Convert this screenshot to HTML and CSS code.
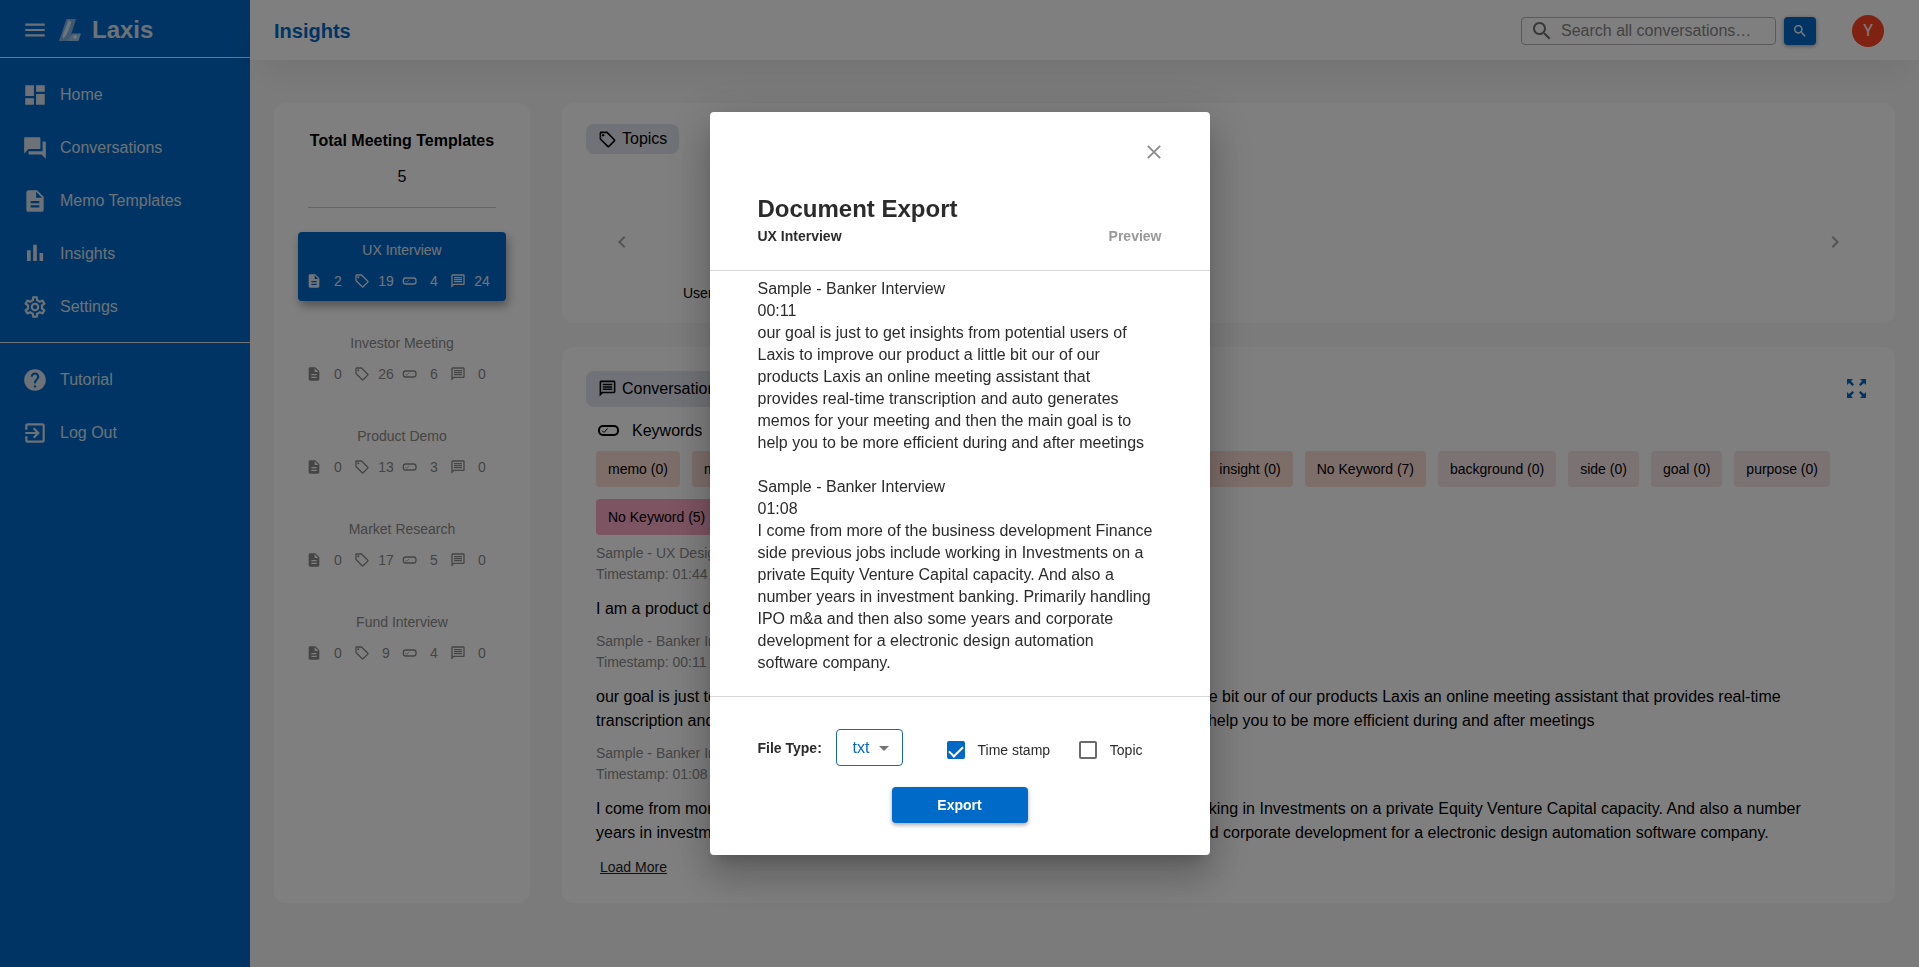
FILE: index.html
```html
<!DOCTYPE html>
<html lang="en">
<head>
<meta charset="utf-8">
<meta name="viewport" content="width=device-width, initial-scale=1">
<title>Laxis - Insights</title>
<link rel="stylesheet" href="styles.css">
</head>
<body>
<svg class="sprite" aria-hidden="true">
  <symbol id="doc" viewBox="0 0 24 24"><path d="M14 2H6c-1.1 0-1.99.9-1.99 2L4 20c0 1.1.89 2 1.99 2H18c1.1 0 2-.9 2-2V8l-6-6zm2 16H8v-2h8v2zm0-4H8v-2h8v2zm-3-5V3.5L18.5 9H13z"/></symbol>
  <symbol id="tag" viewBox="0 0 24 24"><path d="M21.41 11.58l-9-9C12.05 2.22 11.55 2 11 2H4c-1.1 0-2 .9-2 2v7c0 .55.22 1.05.59 1.42l9 9c.36.36.86.58 1.41.58s1.05-.22 1.41-.59l7-7c.37-.36.59-.86.59-1.41s-.23-1.06-.59-1.42zM13 20.01L4 11V4h7v-.01l9 9-7 7.02z"/><circle cx="6.5" cy="6.5" r="1.5"/></symbol>
  <symbol id="pill" viewBox="0 0 24 24"><rect x="2" y="7.500" width="19" height="9" rx="3.500" fill="none" stroke="currentColor" stroke-width="2"/><path d="M5 12l2 2 4-4" fill="none" stroke="currentColor" stroke-width="1"/></symbol>
  <symbol id="chat" viewBox="0 0 24 24"><path d="M4 4h16v12H5.17L4 17.17V4m0-2c-1.1 0-1.99.9-1.99 2L2 22l4-4h14c1.1 0 2-.9 2-2V4c0-1.1-.9-2-2-2H4zm2 10h12v2H6v-2zm0-3h12v2H6V9zm0-3h12v2H6V6z"/></symbol>
  <symbol id="search" viewBox="0 0 24 24"><path d="M15.5 14h-.79l-.28-.27C15.41 12.59 16 11.11 16 9.5 16 5.91 13.09 3 9.5 3S3 5.91 3 9.5 5.91 16 9.5 16c1.61 0 3.09-.59 4.23-1.57l.27.28v.79l5 4.99L20.49 19l-4.99-5zm-6 0C7.01 14 5 11.99 5 9.5S7.01 5 9.5 5 14 7.01 14 9.5 11.99 14 9.5 14z"/></symbol>
</svg>

<div class="app">
  <aside class="sidebar">
    <div class="brand">
      <button class="icon-button" type="button" aria-label="Toggle menu">
        <svg class="nav-icon" viewBox="0 0 24 24"><path d="M3 18h18v-2H3v2zm0-5h18v-2H3v2zm0-7v2h18V6H3z"/></svg>
      </button>
      <svg class="logo" viewBox="0 0 22 22">
        <path d="M7.500 0H17L10 22H0z" fill="#7fb3e2"/>
        <path d="M9.500 1.500Q12.500 1 12 4Q10 13 5 19Q3 20 4 15z" fill="#d6e8f8"/>
        <path d="M13 14.500H22L19.500 22H8.500z" fill="#9cc6ec"/>
        <circle cx="16" cy="18" r="1.800" fill="#e8f3fc"/>
      </svg>
      <span class="brand-name">Laxis</span>
    </div>
    <nav class="nav">
      <a href="#"><svg class="nav-icon" viewBox="0 0 24 24"><path d="M3 13h8V3H3v10zm0 8h8v-6H3v6zm10 0h8V11h-8v10zm0-18v6h8V3h-8z"/></svg>Home</a>
      <a href="#"><svg class="nav-icon" viewBox="0 0 24 24"><path d="M21 6h-2v9H6v2c0 .55.45 1 1 1h11l4 4V7c0-.55-.45-1-1-1zm-4 6V3c0-.55-.45-1-1-1H3c-.55 0-1 .45-1 1v14l4-4h10c.55 0 1-.45 1-1z"/></svg>Conversations</a>
      <a href="#"><svg class="nav-icon"><use href="#doc"/></svg>Memo Templates</a>
      <a href="#"><svg class="nav-icon" viewBox="0 0 24 24"><path d="M4.600 8.500H8V18.500H4.600zM10.300 3.500h3.400v15h-3.400zM16.200 11h3.300v7.500h-3.300z"/></svg>Insights</a>
      <a href="#"><svg class="nav-icon" viewBox="0 0 24 24"><path d="M19.43 12.98c.04-.32.07-.64.07-.98 0-.34-.03-.66-.07-.98l2.11-1.65c.19-.15.24-.42.12-.64l-2-3.46c-.09-.16-.26-.25-.44-.25-.06 0-.12.01-.17.03l-2.49 1c-.52-.4-1.08-.73-1.69-.98l-.38-2.65C14.46 2.18 14.25 2 14 2h-4c-.25 0-.46.18-.49.42l-.38 2.65c-.61.25-1.17.59-1.69.98l-2.49-1c-.06-.02-.12-.03-.18-.03-.17 0-.34.09-.43.25l-2 3.46c-.13.22-.07.49.12.64l2.11 1.65c-.04.32-.07.65-.07.98 0 .33.03.66.07.98l-2.11 1.65c-.19.15-.24.42-.12.64l2 3.46c.09.16.26.25.44.25.06 0 .12-.01.17-.03l2.49-1c.52.4 1.08.73 1.69.98l.38 2.65c.03.24.24.42.49.42h4c.25 0 .46-.18.49-.42l.38-2.65c.61-.25 1.17-.59 1.69-.98l2.49 1c.06.02.12.03.18.03.17 0 .34-.09.43-.25l2-3.46c.12-.22.07-.49-.12-.64l-2.11-1.65zm-1.98-1.71c.04.31.05.52.05.73 0 .21-.02.43-.05.73l-.14 1.13.89.7 1.08.84-.7 1.21-1.27-.51-1.04-.42-.9.68c-.43.32-.84.56-1.25.73l-1.06.43-.16 1.13-.2 1.35h-1.4l-.19-1.35-.16-1.13-1.06-.43c-.43-.18-.83-.41-1.23-.71l-.91-.7-1.06.43-1.27.51-.7-1.21 1.08-.84.89-.7-.14-1.13c-.03-.31-.05-.54-.05-.74s.02-.43.05-.73l.14-1.13-.89-.7-1.08-.84.7-1.21 1.27.51 1.04.42.9-.68c.43-.32.84-.56 1.25-.73l1.06-.43.16-1.13.2-1.35h1.39l.19 1.35.16 1.13 1.06.43c.43.18.83.41 1.23.71l.91.7 1.06-.43 1.27-.51.7 1.21-1.07.85-.89.7.14 1.13zM12 8c-2.21 0-4 1.79-4 4s1.790 4 4 4 4-1.790 4-4-1.790-4-4-4zm0 6c-1.100 0-2-.9-2-2s.9-2 2-2 2 .9 2 2-.9 2-2 2z"/></svg>Settings</a>
    </nav>
    <nav class="nav">
      <a href="#"><svg class="nav-icon" viewBox="0 0 24 24"><path d="M12 2C6.48 2 2 6.48 2 12s4.48 10 10 10 10-4.480 10-10S17.520 2 12 2zm1 17h-2v-2h2v2zm2.070-7.750l-.9.920C13.450 12.900 13 13.500 13 15h-2v-.5c0-1.100.45-2.100 1.170-2.830l1.240-1.260c.37-.36.59-.86.59-1.410 0-1.100-.9-2-2-2s-2 .9-2 2H8c0-2.210 1.790-4 4-4s4 1.790 4 4c0 .88-.36 1.680-.93 2.250z"/></svg>Tutorial</a>
      <a href="#"><svg class="nav-icon" viewBox="0 0 24 24"><path d="M10.090 15.590L11.500 17l5-5-5-5-1.410 1.410L12.670 11H3v2h9.670l-2.580 2.590zM19 3H5c-1.110 0-2 .9-2 2v4h2V5h14v14H5v-4H3v4c0 1.100.89 2 2 2h14c1.100 0 2-.9 2-2V5c0-1.100-.9-2-2-2z"/></svg>Log Out</a>
    </nav>
  </aside>

  <div class="page">
    <header class="topbar">
      <h1>Insights</h1>
      <form class="search">
        <label class="search-box">
          <svg class="search-icon"><use href="#search"/></svg>
          <input type="text" placeholder="Search all conversations…" aria-label="Search all conversations">
        </label>
        <button class="search-button" type="button" aria-label="Search"><svg><use href="#search"/></svg></button>
      </form>
      <div class="avatar">Y</div>
    </header>

    <main class="content">
      <section class="card templates">
        <div class="templates-head">
          <h2>Total Meeting Templates</h2>
          <p>5</p>
        </div>
        <button type="button" class="template active">
          <span class="template-name">UX Interview</span>
          <span class="stats"><svg><use href="#doc"/></svg><span>2</span><svg><use href="#tag"/></svg><span>19</span><svg><use href="#pill"/></svg><span>4</span><svg><use href="#chat"/></svg><span>24</span></span>
        </button>
        <button type="button" class="template">
          <span class="template-name">Investor Meeting</span>
          <span class="stats"><svg><use href="#doc"/></svg><span>0</span><svg><use href="#tag"/></svg><span>26</span><svg><use href="#pill"/></svg><span>6</span><svg><use href="#chat"/></svg><span>0</span></span>
        </button>
        <button type="button" class="template">
          <span class="template-name">Product Demo</span>
          <span class="stats"><svg><use href="#doc"/></svg><span>0</span><svg><use href="#tag"/></svg><span>13</span><svg><use href="#pill"/></svg><span>3</span><svg><use href="#chat"/></svg><span>0</span></span>
        </button>
        <button type="button" class="template">
          <span class="template-name">Market Research</span>
          <span class="stats"><svg><use href="#doc"/></svg><span>0</span><svg><use href="#tag"/></svg><span>17</span><svg><use href="#pill"/></svg><span>5</span><svg><use href="#chat"/></svg><span>0</span></span>
        </button>
        <button type="button" class="template">
          <span class="template-name">Fund Interview</span>
          <span class="stats"><svg><use href="#doc"/></svg><span>0</span><svg><use href="#tag"/></svg><span>9</span><svg><use href="#pill"/></svg><span>4</span><svg><use href="#chat"/></svg><span>0</span></span>
        </button>
      </section>

      <div class="column">
        <section class="card topics">
          <h2 class="section-chip"><svg><use href="#tag"/></svg>Topics</h2>
          <div class="carousel">
            <button class="icon-button" type="button" aria-label="Previous"><svg viewBox="0 0 24 24"><path d="M15.410 7.410L14 6l-6 6 6 6 1.410-1.410L10.830 12z"/></svg></button>
            <button class="icon-button" type="button" aria-label="Next"><svg viewBox="0 0 24 24"><path d="M8.590 16.590L10 18l6-6-6-6-1.410 1.410L13.170 12z"/></svg></button>
          </div>
          <p class="topic-name">User Interview</p>
        </section>

        <section class="card conversations">
          <div class="conversations-head">
            <h2 class="section-chip tall"><svg><use href="#chat"/></svg>Conversations</h2>
            <button class="icon-button expand" type="button" aria-label="Full screen">
              <svg viewBox="0 0 19 19"><path d="M0 0H6L4 2 7 5.500 5.500 7 2 4 0 6zM19 0V6L17 4 13.500 7 12 5.500 15 2 13 0zM0 19V13L2 15 5.500 12 7 13.500 4 17 6 19zM19 19H13L15 17 12 13.500 13.500 12 17 15 19 13z"/></svg>
            </button>
          </div>
          <div class="conversations-body">
            <h3 class="keywords"><svg viewBox="0 0 22 12"><rect x="1" y="1" width="19" height="9" rx="4" fill="none" stroke="currentColor" stroke-width="2"/><path d="M4 5.500l2 2 3.500-4" fill="none" stroke="currentColor" stroke-width="1"/></svg>Keywords</h3>
            <div class="chips">
              <button type="button" class="chip peach">memo (0)</button>
              <button type="button" class="chip peach">meeting (0)</button>
              <button type="button" class="chip peach">transcription (0)</button>
              <button type="button" class="chip peach">product (0)</button>
              <button type="button" class="chip peach">users (0)</button>
              <button type="button" class="chip peach">app (0)</button>
              <button type="button" class="chip peach">insight (0)</button>
              <button type="button" class="chip peach">No Keyword (7)</button>
              <button type="button" class="chip rose">background (0)</button>
              <button type="button" class="chip rose">side (0)</button>
              <button type="button" class="chip rose">goal (0)</button>
              <button type="button" class="chip rose">purpose (0)</button>
              <button type="button" class="chip pink">No Keyword (5)</button>
            </div>
            <article class="excerpt">
              <p class="meta">Sample - UX Design<br>Timestamp: 01:44</p>
              <p>I am a product designer</p>
            </article>
            <article class="excerpt">
              <p class="meta">Sample - Banker Interview<br>Timestamp: 00:11</p>
              <p>our goal is just to get insights from potential users of Laxis to improve our product a little bit our of our products Laxis an online meeting assistant that provides real-time<br>transcription and auto generates memos for your meeting and then the main goal is to help you to be more efficient during and after meetings</p>
            </article>
            <article class="excerpt">
              <p class="meta">Sample - Banker Interview<br>Timestamp: 01:08</p>
              <p>I come from more of the business development Finance side previous jobs include working in Investments on a private Equity Venture Capital capacity. And also a number<br>years in investment banking. Primarily handling IPO m&amp;a and then also some years and corporate development for a electronic design automation software company.</p>
            </article>
            <a class="load-more" href="#">Load More</a>
          </div>
        </section>
      </div>
    </main>
  </div>
</div>

<div class="backdrop">
  <div class="dialog" role="dialog" aria-modal="true" aria-labelledby="dialog-title">
    <div class="dialog-head">
      <button class="icon-button close" type="button" aria-label="Close"><svg viewBox="0 0 14 14"><path d="M.8.8l12.400 12.400M13.200.8L.8 13.200" fill="none" stroke="currentColor" stroke-width="1.800"/></svg></button>
      <h2 id="dialog-title">Document Export</h2>
      <div class="dialog-sub"><span>UX Interview</span><span class="preview">Preview</span></div>
    </div>
    <div class="dialog-body">
      <p>Sample - Banker Interview<br>00:11<br>our goal is just to get insights from potential users of<br>Laxis to improve our product a little bit our of our<br>products Laxis an online meeting assistant that<br>provides real-time transcription and auto generates<br>memos for your meeting and then the main goal is to<br>help you to be more efficient during and after meetings</p>
      <p>Sample - Banker Interview<br>01:08<br>I come from more of the business development Finance<br>side previous jobs include working in Investments on a<br>private Equity Venture Capital capacity. And also a<br>number years in investment banking. Primarily handling<br>IPO m&amp;a and then also some years and corporate<br>development for a electronic design automation<br>software company.</p>
    </div>
    <form class="dialog-foot">
      <div class="options">
        <label class="file-label" for="file-type">File Type:</label>
        <span class="select-wrap">
          <select id="file-type"><option>txt</option></select>
          <svg viewBox="0 0 10 5"><path d="M0 0h10L5 5z"/></svg>
        </span>
        <label class="check"><input type="checkbox" checked>Time stamp</label>
        <label class="check second"><input type="checkbox">Topic</label>
      </div>
      <button class="export" type="button">Export</button>
    </form>
  </div>
</div>
</body>
</html>
```
FILE: styles.css
```css
:root {
  --primary: #0069c8;
  --page: #f7f7f7;
  --muted: #8a8a8a;
}

* { box-sizing: border-box; }

body {
  margin: 0;
  background: var(--page);
  color: #000;
  font: 16px/24px "Liberation Sans", Arial, Helvetica, sans-serif;
}

h1, h2, h3, p { margin: 0; }
button, input, select { font: inherit; color: inherit; }
button { border: 0; background: none; padding: 0; cursor: pointer; }
svg { fill: currentColor; flex: none; display: block; }
.sprite { position: absolute; width: 0; height: 0; }
.icon-button { display: flex; align-items: center; justify-content: center; }

.app { display: flex; min-height: 100vh; }

/* Sidebar */
.sidebar {
  flex: 0 0 250px;
  background: var(--primary);
  color: #d9e4ee;
}
.brand {
  display: flex;
  align-items: center;
  gap: 11px;
  height: 58px;
  padding: 2px 22px 0;
  border-bottom: 1px solid #dfe8f0;
}
.logo { width: 22px; height: 22px; }
.brand-name { font-size: 24px; font-weight: 700; }
.nav-icon { width: 26px; height: 26px; }
.nav { padding: 10px 0 9px; border-bottom: 1px solid #dfe8f0; }
.nav:last-child { border-bottom: 0; }
.nav a {
  display: flex;
  align-items: center;
  gap: 12px;
  height: 53px;
  padding: 0 22px;
  color: inherit;
  text-decoration: none;
}

/* Top bar */
.page { flex: 1; min-width: 0; }
.topbar {
  display: flex;
  align-items: center;
  height: 60px;
  padding: 2px 35px 0 24px;
  background: #fff;
  box-shadow: 0 20px 36px -10px rgba(0, 0, 0, .08);
}
.topbar h1 { margin-right: auto; font-size: 20px; color: var(--primary); }
.search { display: flex; gap: 8px; }
.search-box {
  display: flex;
  align-items: center;
  gap: 7px;
  width: 255px;
  height: 28px;
  padding: 0 8px;
  border: 1px solid #b4b4b4;
  border-radius: 4px;
}
.search-icon { width: 24px; height: 24px; color: #707070; }
.search-box input {
  flex: 1;
  min-width: 0;
  padding: 0;
  border: 0;
  outline: 0;
  background: none;
}
.search-box input::placeholder { color: #858585; opacity: 1; }
.search-button {
  display: flex;
  align-items: center;
  justify-content: center;
  width: 32px;
  height: 28px;
  border-radius: 4px;
  background: var(--primary);
  color: #fff;
  box-shadow: 0 1px 4px rgba(0, 0, 0, .4);
}
.search-button svg { width: 16px; height: 16px; }
.avatar {
  width: 32px;
  height: 32px;
  margin-left: 36px;
  border-radius: 50%;
  background: #ff4522;
  color: #fff;
  font: 16px/32px Roboto, sans-serif;
  text-align: center;
}

/* Cards */
.content { display: flex; gap: 32px; padding: 43px 24px 24px; }
.card { background: #fff; border-radius: 12px; }

.templates { flex: 0 0 256px; padding: 24px; }
.templates-head {
  margin: 0 10px 24px;
  padding: 2px 0 18px;
  border-bottom: 1px solid #c8c8c8;
  text-align: center;
}
.templates-head h2 { margin-bottom: 12px; font-size: 16px; white-space: nowrap; }
.template {
  display: block;
  width: 100%;
  margin-bottom: 24px;
  padding: 8px 4px;
  border-radius: 4px;
  color: var(--muted);
  font-size: 14px;
  line-height: 20px;
}
.template.active {
  background: var(--primary);
  color: #e4eaf0;
  box-shadow: 2px 5px 10px rgba(0, 0, 0, .35);
}
.template-name { display: block; margin-bottom: 9px; }
.stats {
  display: grid;
  grid-template-columns: repeat(8, 24px);
  align-items: center;
  justify-items: center;
  line-height: 24px;
}
.stats svg { width: 16px; height: 16px; }

.column { flex: 1; min-width: 0; display: flex; flex-direction: column; gap: 24px; }
.section-chip {
  display: inline-flex;
  align-items: center;
  gap: 5px;
  height: 30px;
  padding: 0 12px;
  border-radius: 8px;
  background: #e2e5ee;
  font-size: 16px;
  font-weight: 400;
}
.section-chip.tall { height: 36px; }
.section-chip svg { width: 19px; height: 19px; }

.topics { padding: 21px 24px 18px; }
.carousel {
  display: flex;
  justify-content: space-between;
  align-items: center;
  padding: 74px 24px 27px;
  color: #a8a8a8;
}
.carousel svg { width: 24px; height: 24px; }
.topic-name { margin-left: 97px; font-size: 14px; }

.conversations { padding: 24px; }
.conversations-head { display: flex; justify-content: space-between; align-items: center; }
.expand { margin-right: 5px; color: var(--primary); }
.expand svg { width: 19px; height: 19px; }
.conversations-body { padding: 12px 10px 0; }
.keywords {
  display: flex;
  align-items: center;
  gap: 12px;
  margin-bottom: 8px;
  padding-left: 2px;
  font-size: 16px;
  font-weight: 400;
}
.keywords svg { width: 22px; height: 12px; }
.chips { display: flex; flex-wrap: wrap; gap: 12px; margin-bottom: 8px; }
.chip {
  height: 36px;
  padding: 0 12px;
  border-radius: 4px;
  font-size: 14px;
}
.peach { background: #fadcd4; }
.rose { background: #f6e5e9; }
.pink { background: #fba8c5; }

.excerpt { margin-bottom: 10px; }
.meta {
  margin-bottom: 12px;
  color: var(--muted);
  font-size: 14px;
  line-height: 21px;
}
.load-more { margin-left: 4px; color: #222; font-size: 14px; }

/* Export dialog */
.backdrop {
  position: fixed;
  inset: 0;
  display: flex;
  align-items: center;
  justify-content: center;
  background: rgba(0, 0, 0, .5);
}
.dialog {
  width: 500px;
  max-width: 100%;
  border-radius: 4px;
  background: #fff;
  color: #2b2b2b;
  box-shadow:
    0 11px 15px -7px rgba(0, 0, 0, .2),
    0 24px 38px 3px rgba(0, 0, 0, .14),
    0 9px 46px 8px rgba(0, 0, 0, .12);
}
.dialog-head { padding: 28px 48px 22px; }
.close {
  width: 24px;
  height: 24px;
  margin: 0 -4px 30px auto;
  color: #8c8c8c;
}
.close svg { width: 14px; height: 14px; }
.dialog-head h2 { font-size: 24px; line-height: 30px; }
.dialog-sub {
  display: flex;
  justify-content: space-between;
  font-size: 14px;
  font-weight: 700;
}
.preview { color: #999; }
.dialog-body {
  display: flex;
  flex-direction: column;
  gap: 22px;
  padding: 7px 48px 22px;
  border: solid #d8d8d8;
  border-width: 1px 0;
  line-height: 22px;
}
.dialog-foot { padding: 32px 48px; }
.options { display: flex; align-items: center; font-size: 14px; }
.file-label { font-weight: 700; width: 78px; white-space: nowrap; }
.select-wrap { position: relative; width: 67px; margin-right: 44px; }
.select-wrap select {
  display: block;
  width: 100%;
  height: 37px;
  padding: 0 0 0 16px;
  border: 1px solid #1a6aa5;
  border-radius: 4px;
  background: #fff;
  color: var(--primary);
  font-size: 16px;
  appearance: none;
}
.select-wrap svg {
  position: absolute;
  top: 17px;
  right: 14px;
  width: 10px;
  height: 5px;
  color: #757575;
  pointer-events: none;
}
.check { display: flex; align-items: center; gap: 13px; padding-top: 4px; white-space: nowrap; }
.check.second { margin-left: auto; margin-right: 19px; }
.check input {
  display: grid;
  place-items: center;
  width: 18px;
  height: 18px;
  margin: 0;
  border: 2px solid #6b6b6b;
  border-radius: 2px;
  appearance: none;
}
.check input:checked { border-color: var(--primary); background: var(--primary); }
.check input:checked::after {
  content: "";
  width: 6px;
  height: 12px;
  margin-bottom: 4px;
  border: solid #fff;
  border-width: 0 2px 2px 0;
  transform: rotate(45deg);
}
.export {
  display: block;
  width: 136px;
  height: 36px;
  margin: 21px auto 0;
  border-radius: 4px;
  background: #006ac9;
  color: #fff;
  font-size: 14px;
  font-weight: 700;
  box-shadow: 0 2px 4px rgba(0, 0, 0, .35);
}
```
